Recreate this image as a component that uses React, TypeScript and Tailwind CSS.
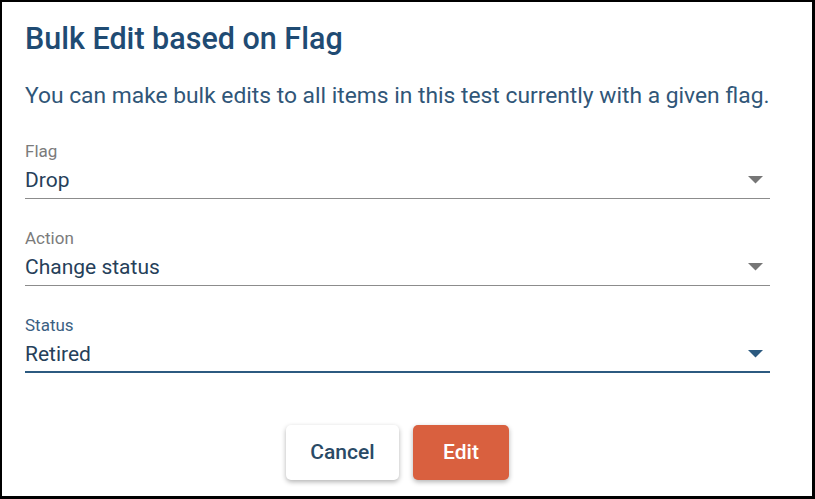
import { FC } from 'react'

const Arrow: FC<{ color: string }> = ({ color }) => (
  <svg width="15" height="8" viewBox="0 0 15 8" className={color}>
    <path d="M0 0 L15 0 L7.5 7.5 Z" fill="currentColor" />
  </svg>
)

const SelectField: FC<{ label: string; value: string; focused?: boolean }> = ({
  label,
  value,
  focused,
}) => (
  <div className="flex flex-col">
    <div
      className={
        focused
          ? 'text-[17px] leading-[24px] text-[#3b6082]'
          : 'text-[17px] leading-[24px] text-[#7b7b7b]'
      }
    >
      {label}
    </div>
    <div
      className={
        focused
          ? 'mt-[3px] flex items-center justify-between pb-[3px] border-b-2 border-[#2c5a80]'
          : 'mt-[3px] flex items-center justify-between pb-[4px] border-b border-[#8c8c8c]'
      }
    >
      <span className="text-[21px] leading-[28px] text-[#263f5a]">{value}</span>
      <span className="mr-[7px]">
        <Arrow color={focused ? 'text-[#2c5a80]' : 'text-[#767676]'} />
      </span>
    </div>
  </div>
)

const App: FC = () => {
  return (
    <div
      className="w-[815px] h-[499px] bg-white border-l-2 border-t-2 border-r-[3px] border-b-[3px] border-black pl-[23px] pr-[42px] pt-[19px] flex flex-col"
      style={{ fontFamily: 'Roboto, sans-serif' }}
    >
      <h1 className="text-[30.5px] leading-[36px] font-medium text-[#1f4b73] whitespace-nowrap">
        Bulk Edit based on Flag
      </h1>
      <p className="mt-[24px] text-[22.8px] leading-[30px] text-[#305678] whitespace-nowrap">
        You can make bulk edits to all items in this test currently with a given flag.
      </p>
      <div className="mt-[28px] flex flex-col gap-[27px]">
        <SelectField label="Flag" value="Drop" />
        <SelectField label="Action" value="Change status" />
        <SelectField label="Status" value="Retired" focused />
      </div>
      <div className="mt-[52px] flex justify-center gap-[14px]">
        <button className="w-[113px] h-[55px] rounded-[5px] bg-white shadow-[0_2px_5px_rgba(0,0,0,0.3)] text-[21px] font-medium text-[#2a4a66]">
          Cancel
        </button>
        <button className="w-[96px] h-[55px] rounded-[5px] bg-[#d9603f] shadow-[0_2px_5px_rgba(0,0,0,0.3)] text-[21px] font-medium text-white">
          Edit
        </button>
      </div>
    </div>
  )
}

export default App
